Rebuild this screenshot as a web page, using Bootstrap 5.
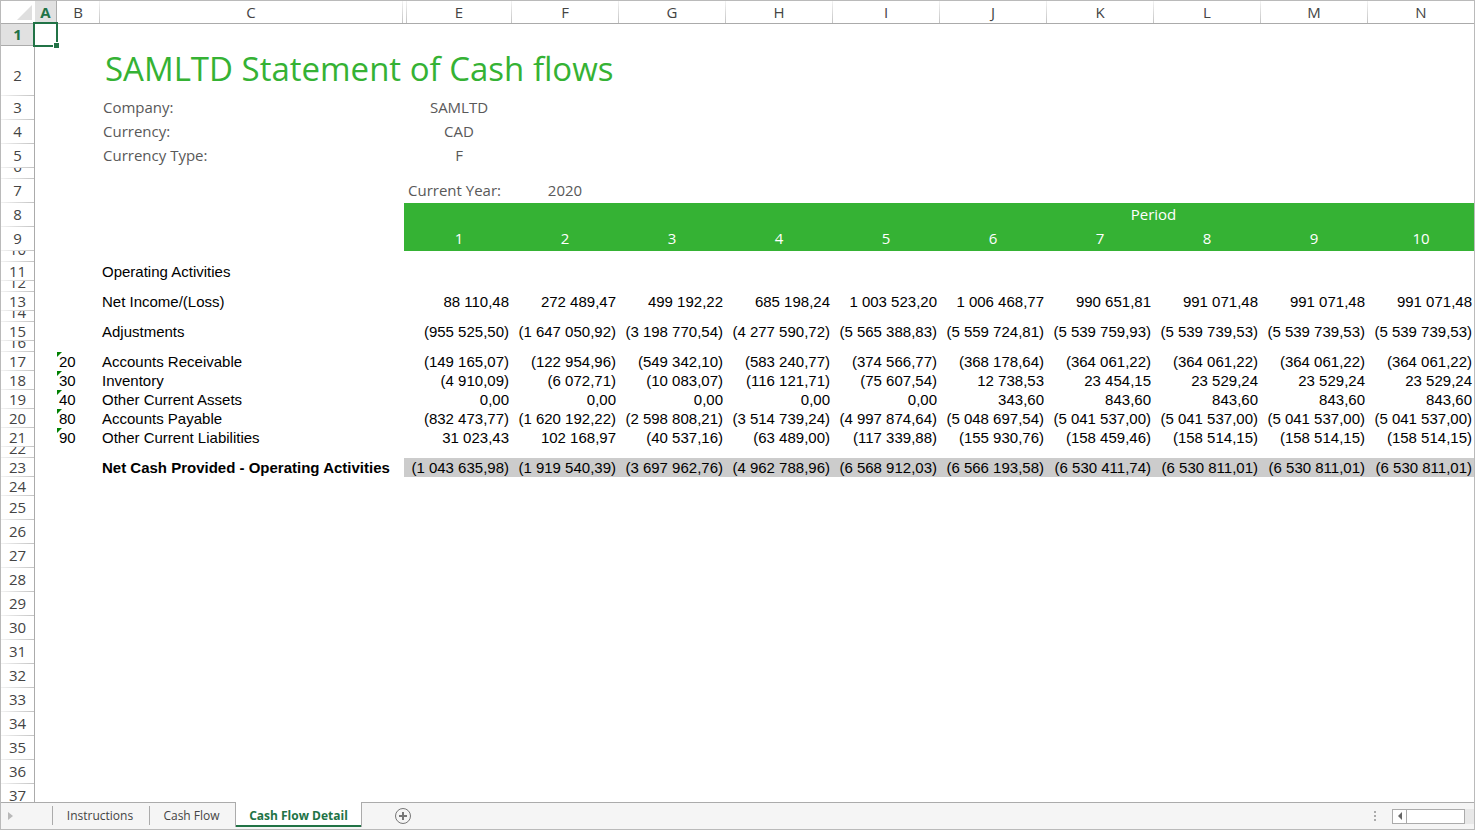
<!DOCTYPE html>
<html lang="en">
<head>
<meta charset="utf-8">
<meta name="viewport" content="width=device-width, initial-scale=1">
<title>Statement of Cash flows</title>
<link href="https://cdn.jsdelivr.net/npm/bootstrap@5.3.0/dist/css/bootstrap.min.css" rel="stylesheet">
<style>
  :root { --ui: "Open Sans", "Noto Sans", sans-serif; --line: #ababab; --xl: #217346; --brand: #35b234; }
  body { font-family: var(--ui); font-size: 15px; color: #444; background: #fff; }
  .frame { border: 1px solid #bababa; }
  .pane { min-height: 0; }
  .sheet { table-layout: fixed; border-collapse: separate; border-spacing: 0; width: calc(100% + 1px); }
  .sheet th, .sheet td { padding: 0; font-weight: 400; white-space: nowrap; vertical-align: bottom; }
  .w-head { width: 34px; } .w-a { width: 22px; } .w-b { width: 43px; } .w-c { width: 303px; } .w-d { width: 4px; } .w-e { width: 105px; }

  .sheet thead th { height: 23px; line-height: 22px; text-align: center; border-bottom: 1px solid var(--line);
    padding-right: 1px; background: linear-gradient(#f2f2f2, #c4c4c4) right / 1px 100% no-repeat; }
  .sheet thead th.corner { background: none; vertical-align: middle; padding-right: 3px; text-align: right; line-height: 0; }
  .sheet thead th.picked { background: #e1e1e1; color: var(--xl); font-weight: 700; border-right: 1px solid var(--line); padding: 0; }
  .sheet tbody th { border-right: 1px solid var(--line); }
  .num { display: flex; align-items: flex-end; justify-content: center; overflow: hidden;
    background: linear-gradient(90deg, #f2f2f2, #c4c4c4) bottom / 100% 1px no-repeat; }
  .picked .num { background: #e1e1e1; color: var(--xl); font-weight: 700; border-bottom: 1px solid var(--line); }

  .row-first { height: 22px; line-height: 22px; } .row-first .num { height: 22px; }
  .row-title { height: 50px; line-height: 42px; } .row-title .num { height: 50px; }
  .row-tall { height: 24px; line-height: 22px; } .row-tall .num { height: 24px; line-height: 26px; }
  .row-data { height: 19px; line-height: 19px; } .row-data .num { height: 19px; }
  .row-gap { height: 11px; line-height: 26px; } .row-gap .num { height: 11px; }
  .row-slim { height: 11px; line-height: 19px; } .row-slim .num { height: 11px; }

  .row-data td { font-family: "Liberation Sans", Arial, sans-serif; color: #000; font-size: 15px; padding: 0 2px; }
  .sheet td.amount { text-align: right; padding: 0 3px 0 0; }
  .row-tall td { padding: 0 1px 2px 3px; color: #595959; }
  .sheet td.current-year { padding-left: 1px; }
  .sheet .row-tall td.mid { text-align: center; padding: 0 1px 2px 0; }
  .sheet .row-title td { padding: 0 0 4px 5px; font-size: 33px; color: var(--brand); line-height: 46px; }
  .sheet .row-tall td.band { background: var(--brand); color: #fff; padding: 0 1px 2px 0; text-align: center; }
  .sheet .total td { font-weight: 700; }
  .sheet .total td.amount, .sheet .total td.grey { background: #ccc; font-weight: 400; }
  .sheet td.edge { border-left: 1px solid #fff; background-clip: padding-box !important; }
  .flagged { position: relative; }
  .flagged::before { content: ""; position: absolute; left: 0; top: 0; border: solid transparent; border-width: 5px 5px 0 0; border-top-color: #008000; }

  .cursor-cell { position: relative; }
  .cursor-cell::before { content: ""; position: absolute; inset: -2px -1px -1px -2px; border: 2px solid var(--xl); }
  .cursor-cell::after { content: ""; position: absolute; right: -2px; bottom: -2px; width: 6px; height: 6px; background: var(--xl); border: solid #fff; border-width: 1px 0 0 1px; }

  .tabs { height: 27px; background: #f5f5f5; font-size: 12px; border-top: 1px solid var(--line); flex: none; }
  .tabs button { border: 0; background: none; padding: 0; color: #444; line-height: 25px; }
  .tabs .nav-arrow { width: 51px; padding-left: 7px; text-align: left; line-height: 0; }
  .tabs .tab { height: 19px; line-height: 19px; margin-top: 3px; padding-right: 2px; border-left: 1px solid var(--line); }
  .tab-one { width: 97px; } .tab-two { width: 86px; }
  .tabs .tab-on { width: 127px; height: 25px; margin-top: -1px; padding-top: 1px; background: #fff; color: var(--xl); font-weight: 700; border: solid var(--line); border-width: 0 1px; box-shadow: inset 0 -2px var(--xl); }
  .tabs .add { width: 18px; margin-left: 32px; line-height: 0; }
  .scroller { height: 15px; width: 82px; background: #e8e8e8; }
  .tabs .scroller button { width: 15px; height: 15px; border: 1px solid var(--line); background: #fff; line-height: 0; }
  .thumb { width: 59px; height: 15px; border: 1px solid var(--line); background: #fff; margin-left: -1px; }
</style>
</head>
<body>
<div class="frame vh-100 d-flex flex-column overflow-hidden">
  <main class="pane flex-grow-1 overflow-hidden">
    <table class="sheet">
      <colgroup><col class="w-head"><col class="w-a"><col class="w-b"><col class="w-c"><col class="w-d"><col class="w-e"><col span="9"></colgroup>
      <thead><tr id="letters"><th class="corner"><svg width="15" height="15" viewBox="0 0 15 15" aria-hidden="true"><path d="M15 0V15H0Z" fill="#dfdfdf"/></svg></th></tr></thead>
      <tbody id="rows"></tbody>
    </table>
  </main>
  <nav class="tabs d-flex align-items-start" aria-label="Sheets">
    <button class="nav-arrow align-self-center" type="button" aria-label="Next sheets"><svg width="5" height="8" viewBox="0 0 5 8"><path d="M0 0L5 4L0 8Z" fill="#b9b9b9"/></svg></button>
    <button class="tab tab-one" type="button">Instructions</button>
    <button class="tab tab-two" type="button">Cash Flow</button>
    <button class="tab-on" type="button">Cash Flow Detail</button>
    <button class="add align-self-center" type="button" aria-label="New sheet"><svg width="18" height="18" viewBox="0 0 18 18" fill="none" stroke="#777"><circle cx="9" cy="9" r="7.5"/><path d="M9 5V13M5 9H13" stroke-width="2"/></svg></button>
    <svg class="ms-auto me-3 align-self-center" width="2" height="10" viewBox="0 0 2 10" fill="#ababab" aria-hidden="true"><path d="M0 0H2V2H0ZM0 4H2V6H0ZM0 8H2V10H0Z"/></svg>
    <div class="scroller d-flex align-self-center">
      <button type="button" aria-label="Scroll left"><svg width="4" height="8" viewBox="0 0 4 8"><path d="M4 0V8L0 4Z" fill="#666"/></svg></button>
      <div class="thumb"></div>
    </div>
  </nav>
</div>
<script>
  const amounts = {
    13: ['', 'Net Income/(Loss)', '88 110,48|272 489,47|499 192,22|685 198,24|1 003 523,20|1 006 468,77|990 651,81|991 071,48|991 071,48|991 071,48'],
    15: ['', 'Adjustments', '(955 525,50)|(1 647 050,92)|(3 198 770,54)|(4 277 590,72)|(5 565 388,83)|(5 559 724,81)|(5 539 759,93)|(5 539 739,53)|(5 539 739,53)|(5 539 739,53)'],
    17: ['20', 'Accounts Receivable', '(149 165,07)|(122 954,96)|(549 342,10)|(583 240,77)|(374 566,77)|(368 178,64)|(364 061,22)|(364 061,22)|(364 061,22)|(364 061,22)'],
    18: ['30', 'Inventory', '(4 910,09)|(6 072,71)|(10 083,07)|(116 121,71)|(75 607,54)|12 738,53|23 454,15|23 529,24|23 529,24|23 529,24'],
    19: ['40', 'Other Current Assets', '0,00|0,00|0,00|0,00|0,00|343,60|843,60|843,60|843,60|843,60'],
    20: ['80', 'Accounts Payable', '(832 473,77)|(1 620 192,22)|(2 598 808,21)|(3 514 739,24)|(4 997 874,64)|(5 048 697,54)|(5 041 537,00)|(5 041 537,00)|(5 041 537,00)|(5 041 537,00)'],
    21: ['90', 'Other Current Liabilities', '31 023,43|102 168,97|(40 537,16)|(63 489,00)|(117 339,88)|(155 930,76)|(158 459,46)|(158 514,15)|(158 514,15)|(158 514,15)'],
    23: ['', 'Net Cash Provided - Operating Activities', '(1 043 635,98)|(1 919 540,39)|(3 697 962,76)|(4 962 788,96)|(6 568 912,03)|(6 566 193,58)|(6 530 411,74)|(6 530 811,01)|(6 530 811,01)|(6 530 811,01)']
  };
  const info = (label, value) => `<td></td><td></td><td>${label}</td><td></td><td class="mid">${value}</td>`;
  const cells = {
    1: '<td class="cursor-cell"></td>',
    2: '<td></td><td></td><td colspan="8">SAMLTD Statement of Cash flows</td>',
    3: info('Company:', 'SAMLTD'), 4: info('Currency:', 'CAD'), 5: info('Currency Type:', 'F'),
    7: '<td colspan="4"></td><td class="current-year">Current Year:</td><td class="mid">2020</td>',
    8: '<td colspan="3"></td><td class="band edge" colspan="7"></td><td class="band" colspan="2">Period</td><td class="band" colspan="2"></td>',
    9: '<td colspan="3"></td><td class="band edge"></td>' + [1,2,3,4,5,6,7,8,9,10].map(n => `<td class="band">${n}</td>`).join(''),
    11: '<td></td><td></td><td>Operating Activities</td>'
  };
  const kind = n => n === 1 ? 'row-first' : n === 2 ? 'row-title' : n === 6 || n === 10 ? 'row-gap'
    : [12, 14, 16, 22].includes(n) ? 'row-slim' : n >= 11 && n <= 24 ? 'row-data' : 'row-tall';

  document.getElementById('letters').insertAdjacentHTML('beforeend',
    ['A', 'B', 'C', '', 'E', 'F', 'G', 'H', 'I', 'J', 'K', 'L', 'M', 'N'].map(c => `<th scope="col"${c === 'A' ? ' class="picked"' : ''}>${c}</th>`).join(''));

  let html = '';
  for (let n = 1; n <= 37; n++) {
    let body = cells[n] || '';
    if (amounts[n]) {
      const [code, label, list] = amounts[n];
      body = `<td></td><td${code ? ' class="flagged"' : ''}>${code}</td><td>${label}</td><td class="${n === 23 ? 'grey edge' : ''}"></td>`
        + list.split('|').map(v => `<td class="amount">${v}</td>`).join('');
    }
    html += `<tr class="${kind(n)}${n === 23 ? ' total' : ''}"><th scope="row"${n === 1 ? ' class="picked"' : ''}><div class="num">${n}</div></th>${body}</tr>`;
  }
  document.getElementById('rows').innerHTML = html;
</script>
<script src="https://cdn.jsdelivr.net/npm/bootstrap@5.3.0/dist/js/bootstrap.bundle.min.js"></script>
</body>
</html>
